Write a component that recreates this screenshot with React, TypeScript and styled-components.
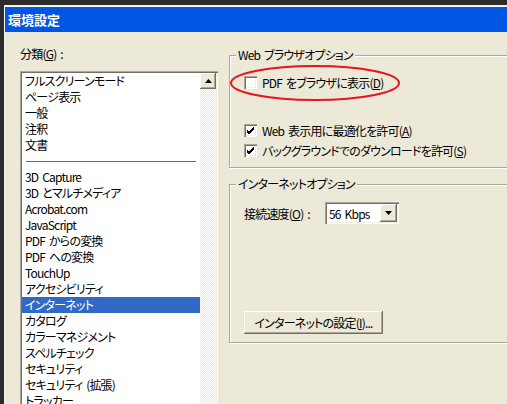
import styled, { createGlobalStyle } from 'styled-components';

const GlobalStyle = createGlobalStyle`
  html, body {
    margin: 0;
    padding: 0;
    background: #2b2b2b;
  }
  body {
    font-family: "Noto Sans CJK JP", "Noto Sans", sans-serif;
    font-size: 12px;
    font-feature-settings: "palt";
    letter-spacing: -0.8px;
    word-spacing: 2px;
    color: #000;
  }
`;

const Screen = styled.div`
  position: relative;
  width: 507px;
  height: 404px;
  overflow: hidden;
  box-sizing: border-box;
  padding: 5px 0 0 4px;
  background: #2b2b2b;
`;

const Window = styled.div`
  display: flex;
  flex-direction: column;
  width: 560px;
  height: 100%;
  box-sizing: border-box;
  border-top: 2px solid #f4f3ee;
  border-left: 1px solid #f4f3ee;
  background: #ece9d8;
`;

const TitleBar = styled.div`
  flex: 0 0 25px;
  padding-left: 3px;
  background: #0055e5;
  color: #fff;
  font-size: 13px;
  font-weight: bold;
  letter-spacing: 0;
  line-height: 25px;
`;

const Body = styled.div`
  flex: 1;
  min-height: 0;
  display: flex;
  gap: 11px;
  padding-left: 15px;
  overflow: hidden;
`;

const LeftColumn = styled.div`
  flex: 0 0 198px;
  display: flex;
  flex-direction: column;
  padding-top: 14px;
`;

const Caption = styled.div`
  line-height: 16px;
`;

const ListBox = styled.div`
  flex: 0 0 340px;
  display: flex;
  margin-top: 9px;
  padding: 2px;
  background: #fff;
  box-shadow:
    inset 1px 1px 0 #aca899,
    inset 2px 2px 0 #716f64,
    inset -1px -1px 0 #fff,
    inset -2px -2px 0 #f1efe2;
`;

const Items = styled.div`
  flex: 1;
  display: flex;
  flex-direction: column;
`;

const Item = styled.div<{ $selected?: boolean }>`
  height: 16px;
  padding-left: 3px;
  line-height: 16px;
  white-space: nowrap;
  background: ${p => (p.$selected ? '#316ac5' : 'transparent')};
  color: ${p => (p.$selected ? '#fff' : '#000')};
`;

const Separator = styled.div`
  height: 16px;
  display: flex;
  align-items: center;
  padding: 0 4px;

  &::after {
    content: '';
    flex: 1;
    height: 1px;
    background: #4a6eab;
  }
`;

const ScrollBar = styled.div`
  flex: 0 0 16px;
  display: flex;
  flex-direction: column;
  background: repeating-conic-gradient(#fff 0 25%, #ece9d8 0 50%) 0 0 / 2px 2px;
`;

const RaisedBox = styled.div`
  display: flex;
  align-items: center;
  justify-content: center;
  background: #ece9d8;
  box-shadow:
    inset -1px -1px 0 #716f64,
    inset 1px 1px 0 #fff,
    inset -2px -2px 0 #aca899;
`;

const ScrollButton = styled(RaisedBox)`
  flex: 0 0 16px;
`;

const RightColumn = styled.div`
  flex: 0 0 300px;
  display: flex;
  flex-direction: column;
  padding-top: 16px;
`;

const GroupBox = styled.fieldset`
  margin: 0;
  padding: 0;
  min-width: 0;
  border: 1px solid #aca899;
  box-shadow: inset 1px 1px 0 #fff, 1px 1px 0 #fff;

  & + & {
    margin-top: 9px;
  }
`;

const Legend = styled.legend`
  margin-left: 6px;
  padding: 0 2px;
  line-height: 14px;
  background: #ece9d8;
`;

const GroupInner = styled.div<{ $top: number; $bottom: number }>`
  display: flex;
  flex-direction: column;
  align-items: flex-start;
  padding: ${p => p.$top}px 0 ${p => p.$bottom}px 14px;
`;

const CheckRow = styled.label<{ $top?: number }>`
  display: flex;
  align-items: center;
  gap: 5px;
  height: 16px;
  margin-top: ${p => p.$top ?? 0}px;
  white-space: nowrap;
`;

const CheckBox = styled.span`
  flex: 0 0 13px;
  height: 13px;
  display: flex;
  align-items: center;
  justify-content: center;
  background: #fff;
  box-shadow:
    inset 1px 1px 0 #aca899,
    inset 2px 2px 0 #716f64,
    inset -1px -1px 0 #fff,
    inset -2px -2px 0 #f1efe2;
`;

const FieldRow = styled.div`
  display: flex;
  align-items: center;
  height: 22px;
`;

const FieldLabel = styled.span`
  flex: 0 0 81px;
  white-space: nowrap;
`;

const Combo = styled.div`
  width: 74px;
  height: 22px;
  box-sizing: border-box;
  display: flex;
  align-items: center;
  padding: 2px;
  background: #fff;
  box-shadow:
    inset 1px 1px 0 #aca899,
    inset 2px 2px 0 #716f64,
    inset -1px -1px 0 #fff,
    inset -2px -2px 0 #f1efe2;
`;

const ComboValue = styled.span`
  flex: 1;
  padding-left: 2px;
  white-space: nowrap;
`;

const ComboButton = styled(RaisedBox)`
  width: 17px;
  height: 18px;
`;

const PushButton = styled.button`
  width: 139px;
  height: 23px;
  margin-top: 87px;
  padding: 0;
  border: none;
  font: inherit;
  letter-spacing: inherit;
  word-spacing: inherit;
  color: #000;
  background: #ece9d8;
  box-shadow:
    inset -1px -1px 0 #716f64,
    inset 1px 1px 0 #fff,
    inset -2px -2px 0 #aca899;
`;

const Highlight = styled.svg`
  position: absolute;
  left: 229px;
  top: 64px;
  overflow: visible;
`;

const Check = () => (
  <svg width="9" height="9" viewBox="0 0 9 9">
    <path d="M1 4 L3 6 L8 1 M1 5 L3 7 L8 2 M1 6 L3 8 L8 3" stroke="#000" strokeWidth="1" fill="none" />
  </svg>
);

const Triangle = ({ up }: { up?: boolean }) => (
  <svg width="7" height="4" viewBox="0 0 7 4">
    <polygon points={up ? '3.5,0 7,4 0,4' : '0,0 7,0 3.5,4'} fill="#000" />
  </svg>
);

type Entry = { label: string; selected?: boolean } | 'separator';

const categories: Entry[] = [
  { label: 'フルスクリーンモード' },
  { label: 'ページ表示' },
  { label: '一般' },
  { label: '注釈' },
  { label: '文書' },
  'separator',
  { label: '3D Capture' },
  { label: '3D とマルチメディア' },
  { label: 'Acrobat.com' },
  { label: 'JavaScript' },
  { label: 'PDF からの変換' },
  { label: 'PDF への変換' },
  { label: 'TouchUp' },
  { label: 'アクセシビリティ' },
  { label: 'インターネット', selected: true },
  { label: 'カタログ' },
  { label: 'カラーマネジメント' },
  { label: 'スペルチェック' },
  { label: 'セキュリティ' },
  { label: 'セキュリティ (拡張)' },
  { label: 'トラッカー' },
];

const App = () => (
  <Screen>
    <GlobalStyle />
    <Window>
      <TitleBar>環境設定</TitleBar>
      <Body>
        <LeftColumn>
          <Caption>
            分類(<u>G</u>) :
          </Caption>
          <ListBox>
            <Items>
              {categories.map((entry, i) =>
                entry === 'separator' ? (
                  <Separator key={`sep-${i}`} />
                ) : (
                  <Item key={entry.label} $selected={entry.selected}>
                    {entry.label}
                  </Item>
                ),
              )}
            </Items>
            <ScrollBar>
              <ScrollButton>
                <Triangle up />
              </ScrollButton>
            </ScrollBar>
          </ListBox>
        </LeftColumn>

        <RightColumn>
          <GroupBox>
            <Legend>Web ブラウザオプション</Legend>
            <GroupInner $top={12} $bottom={9}>
              <CheckRow>
                <CheckBox />
                <span>
                  PDF をブラウザに表示(<u>D</u>)
                </span>
              </CheckRow>
              <CheckRow $top={32}>
                <CheckBox>
                  <Check />
                </CheckBox>
                <span>
                  Web 表示用に最適化を許可(<u>A</u>)
                </span>
              </CheckRow>
              <CheckRow $top={4}>
                <CheckBox>
                  <Check />
                </CheckBox>
                <span>
                  バックグラウンドでのダウンロードを許可(<u>S</u>)
                </span>
              </CheckRow>
            </GroupInner>
          </GroupBox>

          <GroupBox>
            <Legend>インターネットオプション</Legend>
            <GroupInner $top={11} $bottom={8}>
              <FieldRow>
                <FieldLabel>
                  接続速度(<u>O</u>) :
                </FieldLabel>
                <Combo>
                  <ComboValue>56 Kbps</ComboValue>
                  <ComboButton>
                    <Triangle />
                  </ComboButton>
                </Combo>
              </FieldRow>
              <PushButton>
                インターネットの設定(<u>I</u>)...
              </PushButton>
            </GroupInner>
          </GroupBox>
        </RightColumn>
      </Body>
    </Window>

    <Highlight width="172" height="38" viewBox="0 0 172 38">
      <ellipse cx="86" cy="19" rx="84" ry="17" fill="none" stroke="#e8141b" strokeWidth="2" />
    </Highlight>
  </Screen>
);

export default App;
